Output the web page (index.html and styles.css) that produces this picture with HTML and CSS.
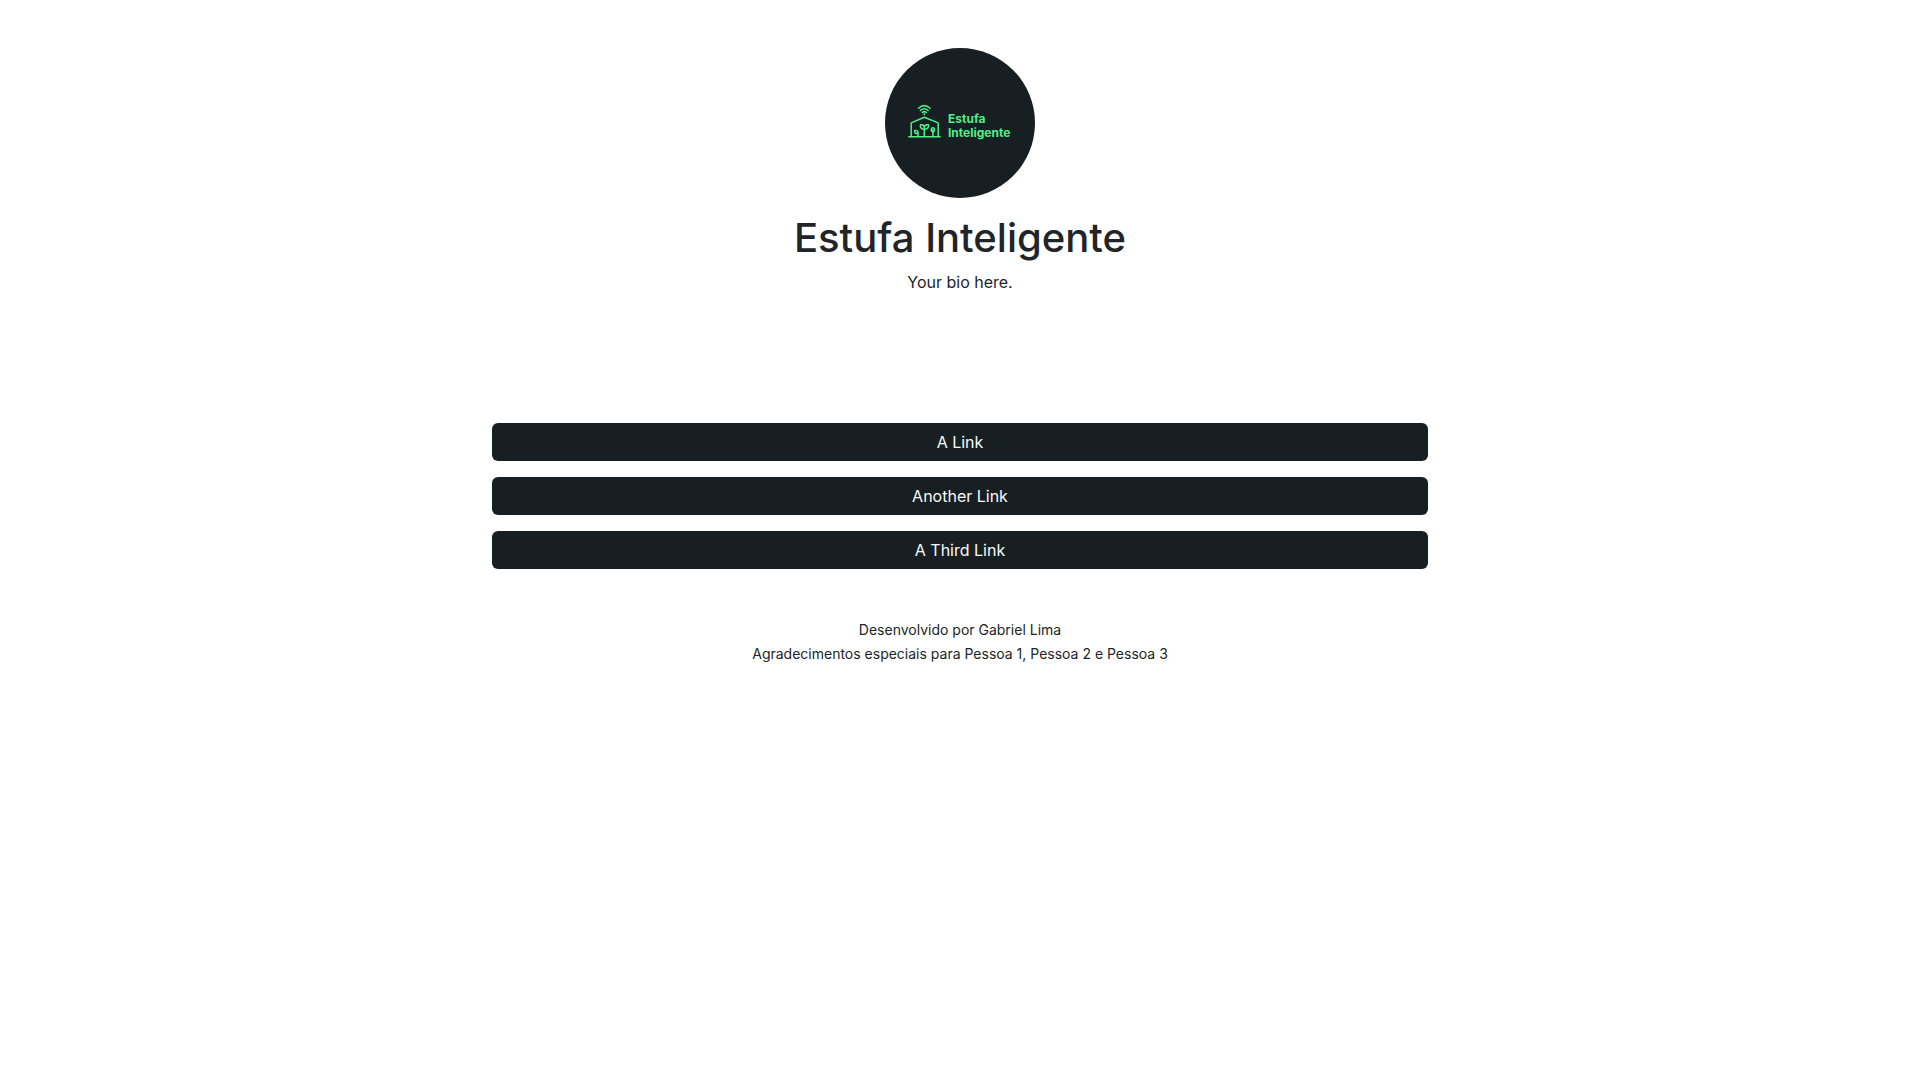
FILE: index.html
```html
<!DOCTYPE html>
<html lang="pt-BR">
<head>
<meta charset="utf-8">
<meta name="viewport" content="width=device-width, initial-scale=1">
<title>Estufa Inteligente</title>
<link rel="stylesheet" href="styles.css">
</head>
<body>
<div class="container">
  <header class="profile">
    <svg class="avatar" viewBox="0 0 150 150" role="img" aria-label="Estufa Inteligente">
      <circle class="avatar-bg" cx="75" cy="75" r="75"/>
      <g class="avatar-lines">
        <path d="M33.5 60.2Q39.3 55 45.1 60.2M35.5 62.4Q39.3 59 43.1 62.4M37.3 64.5Q39.3 62.8 41.3 64.5"/>
        <path d="M23.8 88.7H55M26.2 88.7V74.9L39.3 69.3L53.2 74.9V88.7"/>
        <path d="M39.3 88.5V81.3C36 81.5 34.6 78.5 35.6 76.8C38 76.2 39.8 77.5 39.3 81.3C38.9 77.5 40.8 76.2 43.4 76.8C44.2 78.7 42.8 81.4 39.3 81.3"/>
        <path d="M33 88.5V85.5C30.5 86 29 84.4 29.7 82.5C32 82 33.4 83.3 33 85.5"/>
        <path d="M47.9 88.5V82"/>
        <ellipse cx="47.9" cy="81.8" rx="1.6" ry="2"/>
      </g>
      <circle class="avatar-mark" cx="39.3" cy="66.3" r="1"/>
      <text class="avatar-mark avatar-text" x="63" y="75">Estufa</text>
      <text class="avatar-mark avatar-text" x="63" y="89">Inteligente</text>
    </svg>
    <h1 class="name">Estufa Inteligente</h1>
    <p class="bio">Your bio here.</p>
  </header>
  <nav class="links">
    <a class="link" href="#">A Link</a>
    <a class="link" href="#">Another Link</a>
    <a class="link" href="#">A Third Link</a>
  </nav>
  <footer class="credits">
    <p>Desenvolvido por Gabriel Lima</p>
    <p>Agradecimentos especiais para Pessoa 1, Pessoa 2 e Pessoa 3</p>
  </footer>
</div>
</body>
</html>
```
FILE: styles.css
```css
* {
  box-sizing: border-box;
}

body {
  margin: 0;
  background: #fff;
  color: #212529;
  font-family: Inter, sans-serif;
  font-size: 16px;
  line-height: 24px;
}

.container {
  max-width: 960px;
  margin: 0 auto;
  padding: 48px 12px;
  text-align: center;
}

.avatar {
  display: block;
  width: 150px;
  height: 150px;
  margin: 0 auto 16px;
}

.avatar-bg {
  fill: #181f22;
}

.avatar-lines {
  fill: none;
  stroke: #4ef08a;
  stroke-width: 1.5;
  stroke-linecap: round;
  stroke-linejoin: round;
}

.avatar-mark {
  fill: #4ef08a;
}

.avatar-text {
  font-size: 12px;
  font-weight: 700;
}

.name {
  margin: 0 0 8px;
  font-size: 40px;
  font-weight: 500;
  font-optical-sizing: none;
  line-height: 48px;
}

.bio {
  margin: 0;
}

.links {
  display: flex;
  flex-direction: column;
  gap: 16px;
  margin: 129px 0 49px;
}

.link {
  padding: 7px 12px;
  border-radius: 6px;
  background: #181f22;
  color: #f8f9fa;
  text-decoration: none;
}

.credits {
  font-size: 14px;
}

.credits p {
  margin: 0;
}
```
